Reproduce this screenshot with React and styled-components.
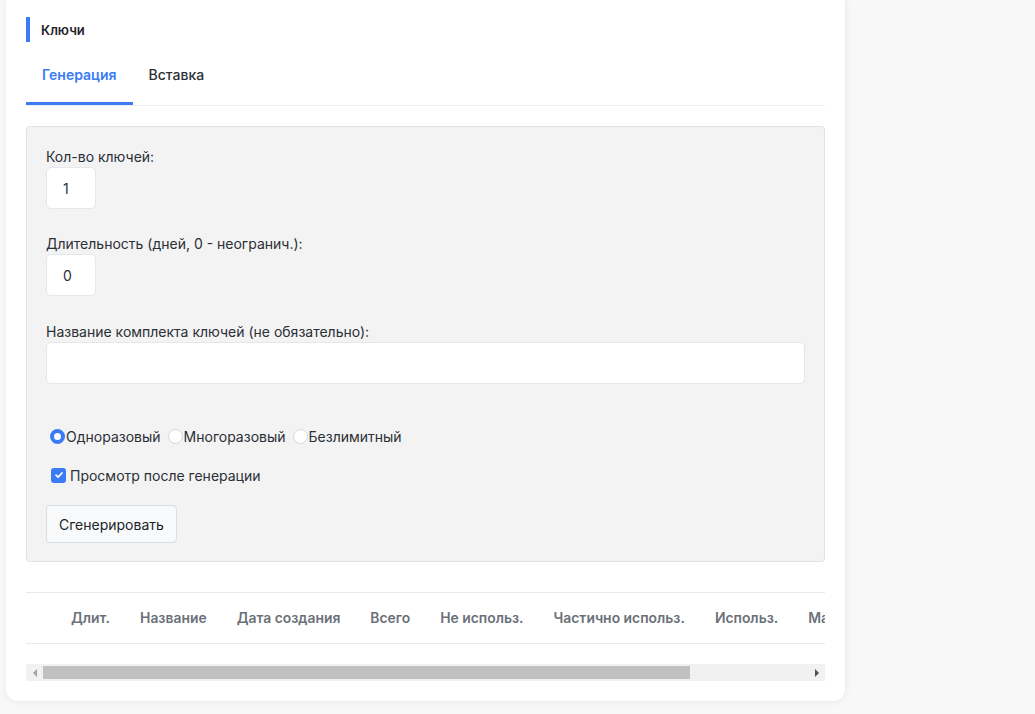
import React, { useState } from "react";
import styled, { createGlobalStyle } from "styled-components";

const GlobalStyle = createGlobalStyle`
  body {
    margin: 0;
    background-color: #f8f8f8;
    font-family: Inter, "Noto Sans", sans-serif;
    color: #212529;
  }
`;

const Page = styled.div`
  padding: 0 189px 14px 6px;
  height: 714px;
  box-sizing: border-box;
  overflow: hidden;
`;

const Card = styled.div`
  width: 840px;
  background-color: #ffffff;
  border-radius: 0 0 12px 12px;
  box-shadow: 0 1px 6px rgba(0, 0, 0, 0.06);
  border-right: 1px solid #eeeef2;
  padding: 17px 20px 20px 20px;
  box-sizing: border-box;
`;

const TitleRow = styled.div`
  display: flex;
  align-items: center;
  height: 25px;
`;

const Accent = styled.div`
  width: 4px;
  height: 25px;
  background-color: #3b7cf6;
  margin-right: 11px;
`;

const Title = styled.h3`
  margin: 0;
  font-size: 13px;
  font-weight: 600;
  color: #1f2329;
`;

const Tabs = styled.div`
  display: flex;
  margin-top: 15px;
  border-bottom: 1px solid #eceef1;
`;

const Tab = styled.div`
  padding: 8px 16px 0 16px;
  height: 37px;
  line-height: 20px;
  font-size: 14px;
  font-weight: ${(p) => (p.$active ? 600 : 500)};
  color: ${(p) => (p.$active ? "#3b7cf6" : "#2b2f36")};
  border-bottom: 3px solid ${(p) => (p.$active ? "#3b7cf6" : "transparent")};
  cursor: pointer;
`;

const Panel = styled.div`
  margin-top: 20px;
  background-color: #f3f3f3;
  border: 1px solid #e2e2e2;
  border-radius: 4px;
  padding: 20px 19px 18px 19px;
`;

const Field = styled.div`
  margin-bottom: ${(p) => p.$mb || 25}px;
`;

const Label = styled.label`
  display: block;
  font-size: 14px;
  line-height: 20px;
  color: #2b2f36;
`;

const Input = styled.input`
  display: block;
  box-sizing: border-box;
  width: ${(p) => (p.$full ? "100%" : "50px")};
  height: 42px;
  border: 1px solid #e6e7eb;
  border-radius: 5px;
  background-color: #ffffff;
  padding: 0 12px 0 ${(p) => (p.$full ? 12 : 16)}px;
  font-family: inherit;
  font-size: 14px;
  color: #2b2f36;
  outline: none;
`;

const OptionRow = styled.div`
  display: flex;
  align-items: center;
  height: 20px;
  margin-top: ${(p) => p.$mt}px;
  padding-left: 4px;
`;

const Option = styled.label`
  display: flex;
  align-items: center;
  font-size: 14px;
  color: #2b2f36;
  margin-right: 7px;
  cursor: pointer;
`;

const Radio = styled.span`
  width: 15px;
  height: 15px;
  box-sizing: border-box;
  border-radius: 50%;
  background-color: #ffffff;
  border: ${(p) => (p.$checked ? "4px solid #3b7cf6" : "1px solid #d4d6da")};
  margin-right: 1px;
`;

const Check = styled.span`
  width: 15px;
  height: 15px;
  border-radius: 3px;
  background-color: #3b7cf6;
  display: flex;
  align-items: center;
  justify-content: center;
  margin: 0 4px 0 1px;
`;

const Button = styled.button`
  margin-top: 20px;
  height: 38px;
  padding: 0 12px;
  background-color: #f8f9fa;
  border: 1px solid #dcdde0;
  border-radius: 4px;
  font-family: inherit;
  font-size: 14px;
  color: #212529;
  cursor: pointer;
`;

const TableWrap = styled.div`
  margin-top: 30px;
  overflow: hidden;
`;

const Table = styled.table`
  border-collapse: collapse;
  white-space: nowrap;
  border-top: 1px solid #e8e9ec;
`;

const Th = styled.th`
  height: 50px;
  padding: 0 15px;
  text-align: left;
  font-size: 13.9px;
  font-weight: 600;
  color: #6b7079;
  border-bottom: 1px solid #e8e9ec;
`;

const Scrollbar = styled.div`
  margin-top: 20px;
  height: 17px;
  background-color: #f1f1f1;
  display: flex;
  align-items: center;
`;

const Arrow = styled.div`
  width: 17px;
  display: flex;
  justify-content: center;
  &::before {
    content: "";
    border-top: 4px solid transparent;
    border-bottom: 4px solid transparent;
    ${(p) =>
      p.$dir === "left"
        ? "border-right: 4px solid #a3a3a3;"
        : "border-left: 4px solid #505050;"}
  }
`;

const Track = styled.div`
  flex: 1;
  height: 100%;
  display: flex;
  align-items: center;
`;

const Thumb = styled.div`
  height: 13px;
  background-color: #c1c1c1;
`;

const columns = [
  "",
  "Длит.",
  "Название",
  "Дата создания",
  "Всего",
  "Не использ.",
  "Частично использ.",
  "Использ.",
  "Макс. использ.",
  "Действия",
];

const types = ["Одноразовый", "Многоразовый", "Безлимитный"];

export default function App() {
  const [tab, setTab] = useState(0);
  const [type, setType] = useState(0);

  return (
    <Page>
      <GlobalStyle />
      <Card>
        <TitleRow>
          <Accent />
          <Title>Ключи</Title>
        </TitleRow>
        <Tabs>
          <Tab $active={tab === 0} onClick={() => setTab(0)}>
            Генерация
          </Tab>
          <Tab $active={tab === 1} onClick={() => setTab(1)}>
            Вставка
          </Tab>
        </Tabs>

        <Panel>
          <Field>
            <Label>Кол-во ключей:</Label>
            <Input defaultValue="1" />
          </Field>
          <Field $mb={26}>
            <Label>Длительность (дней, 0 - неогранич.):</Label>
            <Input defaultValue="0" />
          </Field>
          <Field $mb={0}>
            <Label>Название комплекта ключей (не обязательно):</Label>
            <Input $full />
          </Field>

          <OptionRow $mt={42}>
            {types.map((t, i) => (
              <Option key={t} onClick={() => setType(i)}>
                <Radio $checked={type === i} />
                {t}
              </Option>
            ))}
          </OptionRow>
          <OptionRow $mt={19}>
            <Option>
              <Check>
                <svg width="10" height="10" viewBox="0 0 10 10">
                  <path
                    d="M2 5.2 L4.1 7.2 L8 3"
                    fill="none"
                    stroke="#fff"
                    strokeWidth="1.8"
                    strokeLinecap="round"
                    strokeLinejoin="round"
                  />
                </svg>
              </Check>
              Просмотр после генерации
            </Option>
          </OptionRow>
          <Button>Сгенерировать</Button>
        </Panel>

        <TableWrap>
          <Table>
            <thead>
              <tr>
                {columns.map((c, i) => (
                  <Th key={i}>{c}</Th>
                ))}
              </tr>
            </thead>
          </Table>
        </TableWrap>
        <Scrollbar>
          <Arrow $dir="left" />
          <Track>
            <Thumb style={{ width: "647px" }} />
          </Track>
          <Arrow $dir="right" />
        </Scrollbar>
      </Card>
    </Page>
  );
}
